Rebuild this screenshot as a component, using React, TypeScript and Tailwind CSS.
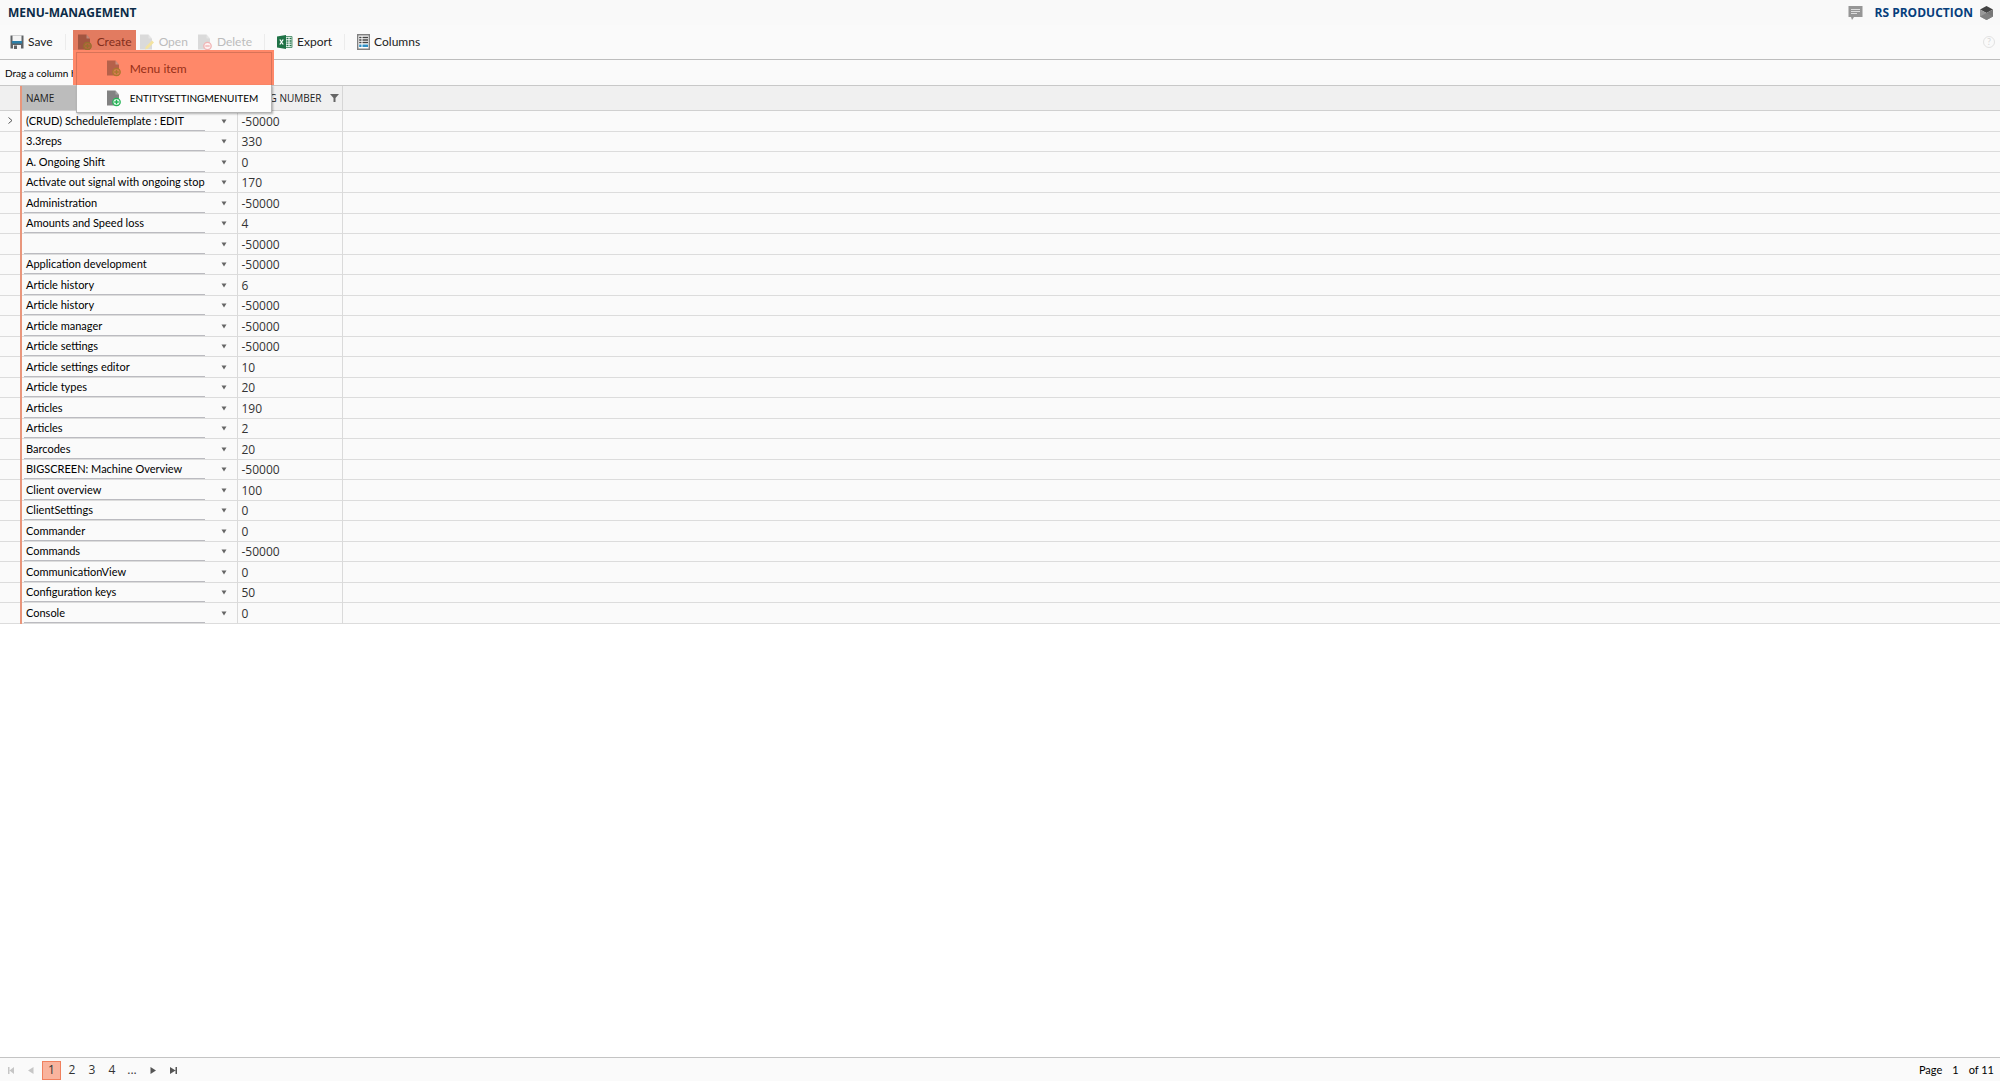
import { type ReactNode } from 'react'

type Row = { name: string; sort: string }

const rows: Row[] = [
  { name: '(CRUD) ScheduleTemplate : EDIT', sort: '-50000' },
  { name: '3.3reps', sort: '330' },
  { name: 'A. Ongoing Shift', sort: '0' },
  { name: 'Activate out signal with ongoing stop', sort: '170' },
  { name: 'Administration', sort: '-50000' },
  { name: 'Amounts and Speed loss', sort: '4' },
  { name: '', sort: '-50000' },
  { name: 'Application development', sort: '-50000' },
  { name: 'Article history', sort: '6' },
  { name: 'Article history', sort: '-50000' },
  { name: 'Article manager', sort: '-50000' },
  { name: 'Article settings', sort: '-50000' },
  { name: 'Article settings editor', sort: '10' },
  { name: 'Article types', sort: '20' },
  { name: 'Articles', sort: '190' },
  { name: 'Articles', sort: '2' },
  { name: 'Barcodes', sort: '20' },
  { name: 'BIGSCREEN: Machine Overview', sort: '-50000' },
  { name: 'Client overview', sort: '100' },
  { name: 'ClientSettings', sort: '0' },
  { name: 'Commander', sort: '0' },
  { name: 'Commands', sort: '-50000' },
  { name: 'CommunicationView', sort: '0' },
  { name: 'Configuration keys', sort: '50' },
  { name: 'Console', sort: '0' },
]

function SaveIcon() {
  return (
    <svg width="14" height="14" viewBox="0 0 14 14" aria-hidden="true">
      <path d="M0.5 0.5h13v13h-13z" fill="#5f6265" />
      <path d="M2.500 0.500h9V6h-9z" fill="#f4f4f4" />
      <path d="M2 6h10v2.500H2z" fill="#2a7fa8" />
      <path d="M3 10h8v4H3z" fill="#f4f4f4" />
      <path d="M4 10.500h3V14H4z" fill="#5f6265" />
    </svg>
  )
}

function PageIcon({ children, fill = '#828282' }: { children?: ReactNode; fill?: string }) {
  return (
    <svg width="16" height="17" viewBox="0 0 16 17" className="shrink-0" aria-hidden="true">
      <path d="M1 0.500h8.500l3.500 4V15.500H1z" fill={fill} />
      <path d="M9.500 0.500v4h3.500z" fill="#fff" fillOpacity="0.3" />
      {children}
    </svg>
  )
}

function PlusBadge({ fill, inner }: { fill: string; inner: string }) {
  return (
    <g>
      <circle cx="10.500" cy="12" r="3.700" fill={inner} stroke={fill} strokeWidth="1.300" />
      <path d="M10.500 9.800v4.400M8.300 12h4.400" stroke={fill} strokeWidth="1.300" />
    </g>
  )
}

function ExcelIcon() {
  return (
    <svg width="16" height="14" viewBox="0 0 16 14" aria-hidden="true">
      <path d="M8 1.500h7v11H8z" fill="#fff" stroke="#5c9a78" />
      <path d="M9.500 3.500h2M9.500 6h2M9.500 8.200h2M9.500 10.500h2M12.500 3.500h2M12.500 6h2M12.500 8.200h2M12.500 10.500h2" stroke="#1f7246" strokeWidth="1.300" />
      <path d="M0 1.500L9 0v14L0 12.500z" fill="#1f7246" />
      <path d="M2.800 4.500l3.400 5M6.200 4.500l-3.400 5" stroke="#fff" strokeWidth="1.300" />
    </svg>
  )
}

function ColumnsIcon() {
  return (
    <svg width="13" height="16" viewBox="0 0 13 16" aria-hidden="true">
      <path d="M0.700 0.700h11.600v14.600H0.700z" fill="#fff" stroke="#808080" strokeWidth="1.400" />
      <path d="M2.200 3.500h2.300M2.200 6h2.300M2.200 8.500h2.300M5.500 3.500h5.500M5.500 6h5.500M5.500 8.500h5.500" stroke="#444" strokeWidth="1.400" />
      <path d="M2.200 11.700h2.300M5.500 11.700h5.500" stroke="#2f8fc4" strokeWidth="2.400" />
    </svg>
  )
}

function ToolButton({ icon, label, disabled }: { icon: ReactNode; label: string; disabled?: boolean }) {
  return (
    <button
      type="button"
      disabled={disabled}
      className="flex items-center gap-1 text-[12px] leading-4 text-[#222] disabled:text-[#bcbcbc]"
    >
      {icon}
      {label}
    </button>
  )
}

function CreateMenu() {
  return (
    <div className="relative">
      <button
        type="button"
        aria-expanded="true"
        className="flex h-[21px] w-[63px] items-center gap-1 bg-[#e27b60] pt-1 pl-1 text-[12px] leading-4 text-[#832f1c]"
      >
        <PageIcon fill="#a35540">
          <PlusBadge fill="#96702e" inner="#b8633f" />
        </PageIcon>
        Create
      </button>
      <ul className="absolute top-5 left-0 z-10 w-[201px]">
        <li className="bg-[#ff8869] pt-[2px] pr-[2px] pl-[3px]">
          <button
            type="button"
            className="flex h-[33px] w-full items-center gap-2 border-x border-t border-[#d87358] pl-[29px] text-[12px] text-[#962f17]"
          >
            <PageIcon fill="#b5614a">
              <PlusBadge fill="#a8782e" inner="#d97a52" />
            </PageIcon>
            Menu item
          </button>
        </li>
        <li className="mr-[2px] ml-[3px] border border-t-0 border-[#b5b5b5] bg-[#fcfcfc] shadow-[1px_1px_2px_rgba(0,0,0,0.3)]">
          <button type="button" className="flex h-[27px] w-full items-center gap-2 pl-[29px] text-[10px] text-black">
            <PageIcon>
              <PlusBadge fill="#22b455" inner="#e4f7ea" />
            </PageIcon>
            ENTITYSETTINGMENUITEM
          </button>
        </li>
      </ul>
    </div>
  )
}

function Toolbar() {
  return (
    <div className="flex h-[35px] items-center border-b border-[#bdbdbd] bg-[#fafafa] pt-1 pr-[5px] pb-1 pl-[10px] font-[Lato,sans-serif]">
      <ToolButton icon={<SaveIcon />} label="Save" />
      <span className="mr-[7px] ml-3 h-4 w-px bg-[#ececec]" />
      <div className="-mt-1">
        <CreateMenu />
      </div>
      <div className="ml-[3px] flex items-center gap-[9px]">
        <ToolButton
          disabled
          label="Open"
          icon={
            <PageIcon fill="#dadada">
              <path d="M6 15.500l1-3 6-6 2 2-6 6z" fill="#f3e3a0" />
            </PageIcon>
          }
        />
        <ToolButton
          disabled
          label="Delete"
          icon={
            <PageIcon fill="#dadada">
              <circle cx="10.500" cy="12" r="3.700" fill="#fdf2f2" stroke="#f0b4b4" strokeWidth="1.300" />
              <path d="M8.300 12h4.400" stroke="#f0b4b4" strokeWidth="1.400" />
            </PageIcon>
          }
        />
      </div>
      <span className="mr-3 ml-3 h-4 w-px bg-[#ececec]" />
      <ToolButton icon={<ExcelIcon />} label="Export" />
      <span className="mr-3 ml-3 h-4 w-px bg-[#ececec]" />
      <ToolButton icon={<ColumnsIcon />} label="Columns" />
      <button
        type="button"
        aria-label="Help"
        className="ml-auto size-3 rounded-full border border-[#e2e2e2] text-[9px] leading-[10px] text-[#d8d8d8]"
      >
        ?
      </button>
    </div>
  )
}

function Grid() {
  return (
    <table className="w-full table-fixed border-collapse text-left">
      <colgroup>
        <col className="w-[21px]" />
        <col className="w-[216px]" />
        <col className="w-[105px]" />
        <col />
      </colgroup>
      <thead>
        <tr className="h-6 border-b border-[#d0d0d0] bg-[#f0f0f0] text-[10px] leading-4 text-[#222]">
          <th />
          <th className="border-l-2 border-[#e8967c] bg-[#bcbcbc] pl-1 font-normal">NAME</th>
          <th className="border-x border-[#d6d6d6] font-normal">
            <div className="flex items-center justify-end gap-2 pr-[3px] whitespace-nowrap">
              SORTING NUMBER
              <svg width="9" height="8" viewBox="0 0 9 8" className="shrink-0" aria-hidden="true">
                <path d="M0 0h9L5.500 4v4h-2V4z" fill="#666" />
              </svg>
            </div>
          </th>
          <th />
        </tr>
      </thead>
      <tbody>
        {rows.map((row, i) => (
          <tr key={i} className="border-b border-[#dcdcdc] bg-[#fafafa] odd:h-[21px] even:h-5">
            <td className="p-0">
              {i === 0 && (
                <svg width="5" height="7" viewBox="0 0 5 7" className="mx-auto" aria-hidden="true">
                  <path d="M0.500 0.500l3.500 3-3.500 3" fill="none" stroke="#555" />
                </svg>
              )}
            </td>
            <td className="border-l-2 border-[#e8967c] p-0 align-bottom">
              <div className="flex h-[19px] items-center">
                <div className="ml-0.5 h-full w-[181px] border-b border-[#bbbbc0] pl-[2px] font-[Lato,sans-serif] text-[11px] leading-[18px] whitespace-nowrap text-black">
                  {row.name}
                </div>
                <svg width="6" height="5" viewBox="0 0 6 5" className="ml-4" aria-hidden="true">
                  <path d="M0.500 0.500h5L3 4.500z" fill="#666" />
                </svg>
              </div>
            </td>
            <td className="border-x border-[#dadada] p-0 pl-1 align-bottom text-[12px] leading-[18px] text-[#333]">
              {row.sort}
            </td>
            <td />
          </tr>
        ))}
      </tbody>
    </table>
  )
}

function Pager() {
  return (
    <footer className="flex h-6 items-center justify-between border-t border-[#c4c4c4] bg-[#fafafa] pt-px pr-[6px] pl-2 text-[12px] text-[#333]">
      <nav className="flex items-center" aria-label="Pages">
        <button type="button" disabled aria-label="First page">
          <svg width="6" height="7" viewBox="0 0 6 7" aria-hidden="true">
            <path d="M0 0h1.500v7H0zM6 0v7L1.500 3.500z" fill="#c6c6c6" />
          </svg>
        </button>
        <button type="button" disabled aria-label="Previous page" className="mr-2 ml-[14px]">
          <svg width="6" height="7" viewBox="0 0 6 7" aria-hidden="true">
            <path d="M5.500 0v7L0 3.500z" fill="#c6c6c6" />
          </svg>
        </button>
        <button
          type="button"
          aria-current="page"
          className="mr-px h-[19px] w-[19px] border border-[#f0805e] bg-[#f9b39d] leading-4"
        >
          1
        </button>
        {['2', '3', '4', '...'].map((label) => (
          <button key={label} type="button" className="h-[19px] w-5">
            {label}
          </button>
        ))}
        <button type="button" aria-label="Next page" className="ml-2">
          <svg width="6" height="7" viewBox="0 0 6 7" aria-hidden="true">
            <path d="M0.500 0v7L6 3.500z" fill="#555" />
          </svg>
        </button>
        <button type="button" aria-label="Last page" className="ml-[14px]">
          <svg width="7" height="7" viewBox="0 0 7 7" aria-hidden="true">
            <path d="M5.500 0H7v7H5.500zM0 0v7l5.500-3.500z" fill="#555" />
          </svg>
        </button>
      </nav>
      <div className="flex font-[Lato,sans-serif] text-[11px] text-black">
        <span className="mr-[10px]">Page</span>
        <span className="mr-[10px]">1</span>
        <span>of 11</span>
      </div>
    </footer>
  )
}

export default function App() {
  return (
    <div className="flex min-h-screen flex-col bg-white font-['Open_Sans','Noto_Sans',sans-serif]">
      <header className="flex h-[25px] items-center justify-between bg-[#f9f9f9] pr-[7px] pl-2">
        <h1 className="text-[12px] font-bold text-[#0b2c48]">MENU-MANAGEMENT</h1>
        <div className="flex items-center">
          <svg width="15" height="14" viewBox="0 0 15 14" aria-hidden="true">
            <path d="M0.500 0h14v11H6l-2 3-1-3H0.500z" fill="#969696" />
            <path d="M3 3.500h9M3 5.500h9M3 7.500h6" stroke="#ddd" />
          </svg>
          <span className="mr-[7px] ml-3 text-[12px] font-bold text-[#063e7c]">RS PRODUCTION</span>
          <svg width="13" height="14" viewBox="0 0 13 14" aria-hidden="true">
            <path d="M6.500 0L13 3.500 6.500 7 0 3.500z" fill="#444" />
            <path d="M0 3.500L6.500 7v7L0 10.500z" fill="#999" />
            <path d="M13 3.500L6.500 7v7l6.500-3.500z" fill="#777" />
            <path d="M0 10.500L6.500 7l6.500 3.500L6.500 14z" fill="#808080" />
          </svg>
        </div>
      </header>
      <Toolbar />
      <div className="flex h-[26px] items-center border-b border-[#c8c8c8] bg-[#fafafa] pt-px pl-[5px] font-[Lato,sans-serif] text-[10px] text-black">
        Drag a column header and drop here to group by that column
      </div>
      <main className="flex-1">
        <Grid />
      </main>
      <Pager />
    </div>
  )
}
